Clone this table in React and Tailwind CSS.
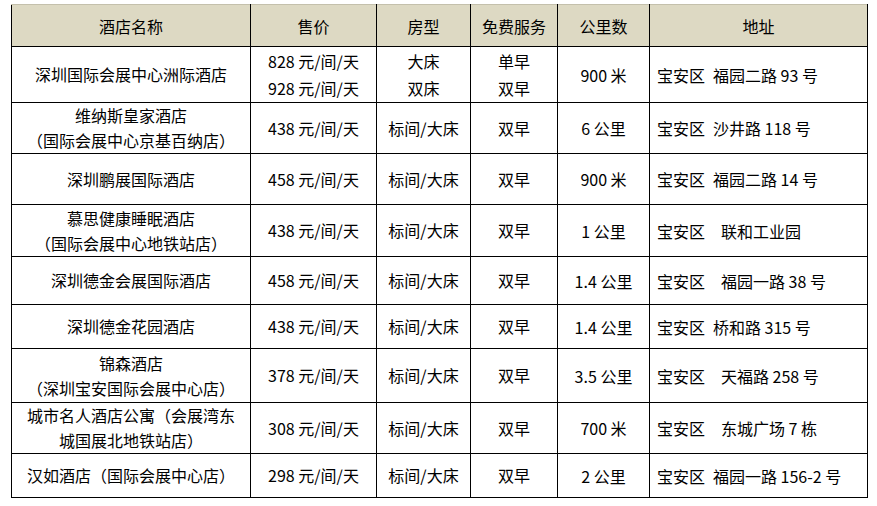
import React from 'react';

const rows = [
  { h: 'h-[56px]', name: ['深圳国际会展中心洲际酒店'], price: ['828 元/间/天', '928 元/间/天'], room: ['大床', '双床'], free: ['单早', '双早'], dist: '900 米', addr: '宝安区\u2002福园二路 93 号', tall: true },
  { h: 'h-[51px]', name: ['维纳斯皇家酒店', '（国际会展中心京基百纳店）'], price: ['438 元/间/天'], room: ['标间/大床'], free: ['双早'], dist: '6 公里', addr: '宝安区\u2002沙井路 118 号' },
  { h: 'h-[51px]', name: ['深圳鹏展国际酒店'], price: ['458 元/间/天'], room: ['标间/大床'], free: ['双早'], dist: '900 米', addr: '宝安区\u2002福园二路 14 号' },
  { h: 'h-[52px]', name: ['慕思健康睡眠酒店', '（国际会展中心地铁站店）'], price: ['438 元/间/天'], room: ['标间/大床'], free: ['双早'], dist: '1 公里', addr: '宝安区　联和工业园' },
  { h: 'h-[48px]', name: ['深圳德金会展国际酒店'], price: ['458 元/间/天'], room: ['标间/大床'], free: ['双早'], dist: '1.4 公里', addr: '宝安区　福园一路 38 号' },
  { h: 'h-[44px]', name: ['深圳德金花园酒店'], price: ['438 元/间/天'], room: ['标间/大床'], free: ['双早'], dist: '1.4 公里', addr: '宝安区\u2002桥和路 315 号' },
  { h: 'h-[54px]', name: ['锦森酒店', '（深圳宝安国际会展中心店）'], price: ['378 元/间/天'], room: ['标间/大床'], free: ['双早'], dist: '3.5 公里', addr: '宝安区　天福路 258 号' },
  { h: 'h-[49px]', name: ['城市名人酒店公寓（会展湾东', '城国展北地铁站店）'], price: ['308 元/间/天'], room: ['标间/大床'], free: ['双早'], dist: '700 米', addr: '宝安区　东城广场 7 栋' },
  { h: 'h-[44px]', name: ['汉如酒店（国际会展中心店）'], price: ['298 元/间/天'], room: ['标间/大床'], free: ['双早'], dist: '2 公里', addr: '宝安区\u2002福园一路 156-2 号' },
];

const Lines = ({ items, tall }) => (
  <div className={tall ? 'leading-[27px]' : 'leading-[25px]'}>
    {items.map((t, i) => (
      <div key={i}>{t}</div>
    ))}
  </div>
);

const App = () => {
  return (
    <div className="w-[877px] h-[506px] bg-white pt-[4px] pl-[11px] font-['Noto_Sans_CJK_SC',sans-serif] text-[16px] leading-[24px] text-black">
      <table className="table-fixed border-collapse w-[856px]">
        <colgroup>
          <col className="w-[239px]" />
          <col className="w-[126px]" />
          <col className="w-[94px]" />
          <col className="w-[87px]" />
          <col className="w-[92px]" />
          <col className="w-[218px]" />
        </colgroup>
        <thead>
          <tr className="h-[42px] bg-[#ddd9c3]">
            <th className="border border-black border-t-[#c4c0ac] font-normal text-center p-0">酒店名称</th>
            <th className="border border-black border-t-[#c4c0ac] font-normal text-center p-0">售价</th>
            <th className="border border-black border-t-[#c4c0ac] font-normal text-center p-0">房型</th>
            <th className="border border-black border-t-[#c4c0ac] font-normal text-center p-0">免费服务</th>
            <th className="border border-black border-t-[#c4c0ac] font-normal text-center p-0">公里数</th>
            <th className="border border-black border-t-[#c4c0ac] font-normal text-center p-0">地址</th>
          </tr>
        </thead>
        <tbody>
          {rows.map((r, i) => (
            <tr key={i} className={r.h}>
              <td className="border border-black text-center p-0 align-middle whitespace-nowrap"><Lines items={r.name} tall={r.tall} /></td>
              <td className="border border-black text-center p-0 align-middle whitespace-nowrap"><Lines items={r.price} tall={r.tall} /></td>
              <td className="border border-black text-center p-0 align-middle whitespace-nowrap"><Lines items={r.room} tall={r.tall} /></td>
              <td className="border border-black text-center p-0 align-middle whitespace-nowrap"><Lines items={r.free} tall={r.tall} /></td>
              <td className="border border-black text-center p-0 align-middle whitespace-nowrap">{r.dist}</td>
              <td className="border border-black text-left pl-[7px] py-0 align-middle whitespace-pre">{r.addr}</td>
            </tr>
          ))}
        </tbody>
      </table>
    </div>
  );
};

export default App;
